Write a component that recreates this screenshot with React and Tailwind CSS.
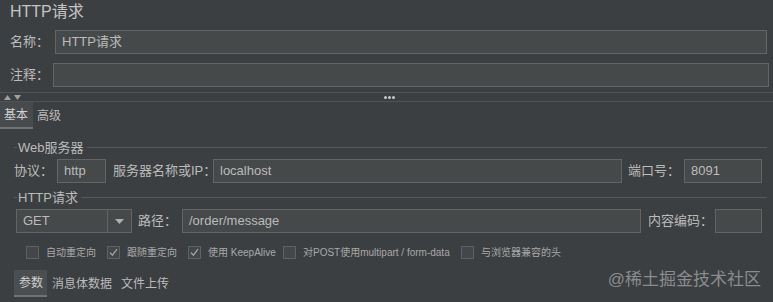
import React from "react";

const Field = ({ value = "", className = "" }) => (
  <div
    className={`shrink-0 h-[24px] border border-[#646464] bg-[#45494a] px-[6px] flex items-center text-[13px] text-[#bbbbbb] whitespace-nowrap ${className}`}
  >
    {value}
  </div>
);

const Label = ({ text, className = "" }) => (
  <span className={`shrink-0 whitespace-nowrap text-[13px] ${className}`}>{text}</span>
);

const Legend = ({ title }) => (
  <div className="flex items-center h-[14px] pl-[14px] pr-[6px]">
    <span className="w-[3px] h-px bg-[#555a5c]" />
    <span className="text-[13px] leading-none text-[#bbbbbb] px-[1px] whitespace-nowrap">{title}</span>
    <span className="flex-1 h-px bg-[#555a5c] ml-[2px]" />
  </div>
);

const Check = ({ checked, label, className = "" }) => (
  <div className={`flex items-center gap-[7px] shrink-0 ${className}`}>
    <span className="w-[13px] h-[13px] border border-[#5e6264] bg-[#43474a] flex items-center justify-center">
      {checked && (
        <svg width="9" height="9" viewBox="0 0 9 9">
          <path d="M1 4.6 L3.4 7.2 L8 1.2" fill="none" stroke="#a8a8a8" strokeWidth="1.2" />
        </svg>
      )}
    </span>
    <span className="text-[10px] text-[#a9a9a9] whitespace-nowrap">{label}</span>
  </div>
);

export default function App() {
  return (
    <div
      className="w-[773px] h-[302px] overflow-hidden bg-[#3c3f41] text-[#bbbbbb] relative"
      style={{ fontFamily: '"Liberation Sans", "Noto Sans CJK SC", sans-serif' }}
    >
      {/* Title */}
      <div className="h-[30px] pl-[10px] pt-[1px] text-[16px] leading-[22px] text-[#c4c4c4]">HTTP请求</div>

      {/* Name */}
      <div className="flex items-center h-[24px] pl-[10px] pr-[6px]">
        <Label text="名称：" className="w-[45px]" />
        <Field value="HTTP请求" className="flex-1" />
      </div>

      {/* Comment */}
      <div className="flex items-center h-[24px] mt-[9px] pl-[10px] pr-[4px]">
        <Label text="注释：" className="w-[43px]" />
        <Field className="flex-1" />
      </div>

      {/* Splitter */}
      <div className="mt-[5px] h-[10px] border-t border-b border-[#4f5355] flex items-center">
        <div className="flex items-center gap-[3px] pl-[4px]">
          <svg width="7" height="5" viewBox="0 0 7 5"><path d="M0 5 L3.5 0 L7 5Z" fill="#a0a0a0" /></svg>
          <svg width="7" height="5" viewBox="0 0 7 5"><path d="M0 0 L3.5 5 L7 0Z" fill="#a0a0a0" /></svg>
        </div>
        <div className="flex gap-[1px] ml-[363px]">
          <span className="w-[3px] h-[3px] rounded-full bg-[#c8c8c8]" />
          <span className="w-[3px] h-[3px] rounded-full bg-[#c8c8c8]" />
          <span className="w-[3px] h-[3px] rounded-full bg-[#c8c8c8]" />
        </div>
      </div>

      {/* Tabs */}
      <div className="flex items-stretch h-[27px] text-[12px]">
        <div className="w-[33px] pl-[4px] bg-[#474b4d] border-b-2 border-[#6e7275] flex items-center text-[#d0d0d0]">基本</div>
        <div className="pl-[4px] flex items-center">高级</div>
      </div>

      {/* Web server */}
      <div className="mt-[11px]">
        <Legend title="Web服务器" />
        <div className="flex items-center h-[24px] mt-[5px] pl-[14px]">
          <Label text="协议：" className="w-[43px]" />
          <Field value="http" className="w-[49px]" />
          <Label text="服务器名称或IP：" className="ml-[7px] w-[100px] text-[12px]" />
          <Field value="localhost" className="w-[409px]" />
          <Label text="端口号：" className="ml-[6px] w-[56px]" />
          <Field value="8091" className="w-[78px]" />
        </div>
      </div>

      {/* HTTP request */}
      <div className="mt-[7px]">
        <Legend title="HTTP请求" />
        <div className="flex items-center h-[24px] mt-[5px] pl-[16px]">
          <div className="shrink-0 w-[116px] h-[24px] border border-[#646464] bg-[#45494a] flex items-center text-[13px]">
            <span className="flex-1 pl-[6px]">GET</span>
            <span className="w-[24px] h-full border-l border-[#646464] flex items-center justify-center">
              <svg width="9" height="5" viewBox="0 0 9 5"><path d="M0 0 L4.5 5 L9 0Z" fill="#b0b0b0" /></svg>
            </span>
          </div>
          <Label text="路径：" className="ml-[6px] w-[44px]" />
          <Field value="/order/message" className="w-[459px]" />
          <Label text="内容编码：" className="ml-[7px] w-[67px]" />
          <Field className="w-[47px]" />
        </div>
      </div>

      {/* Checkboxes */}
      <div className="flex items-center h-[14px] mt-[12px] pl-[26px]">
        <Check label="自动重定向" className="w-[81px]" />
        <Check checked label="跟随重定向" className="w-[81px]" />
        <Check checked label="使用 KeepAlive" className="w-[95px]" />
        <Check label="对POST使用multipart / form-data" className="w-[178px]" />
        <Check label="与浏览器兼容的头" />
      </div>

      {/* Bottom tabs */}
      <div className="flex items-stretch h-[27px] mt-[11px] ml-[14px] text-[12px]">
        <div className="w-[33px] pl-[5px] bg-[#4a4e50] border-b-2 border-[#6e7275] flex items-center text-[#d0d0d0]">参数</div>
        <div className="pl-[5px] flex items-center">消息体数据</div>
        <div className="pl-[9px] flex items-center">文件上传</div>
      </div>

      {/* Watermark */}
      <div className="absolute right-[12px] bottom-[10px] text-[17px] text-[#8a8c8e]">@稀土掘金技术社区</div>
    </div>
  );
}
